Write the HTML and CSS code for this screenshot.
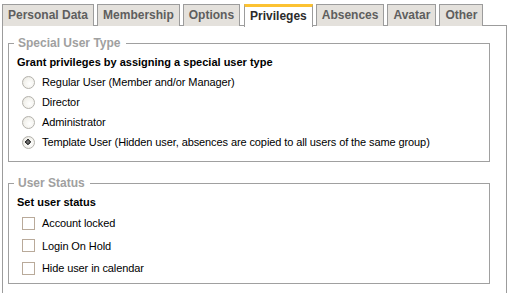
FILE: index.html
```html
<!DOCTYPE html>
<html lang="en">
<head>
    <meta charset="UTF-8">
    <title>User Privileges</title>
    <link rel="stylesheet" href="styles.css">
</head>
<body>
    <div class="tabs">
        <div class="tab">Personal Data</div>
        <div class="tab">Membership</div>
        <div class="tab">Options</div>
        <div class="tab active">Privileges</div>
        <div class="tab">Absences</div>
        <div class="tab">Avatar</div>
        <div class="tab">Other</div>
    </div>

    <div class="panel">
        <fieldset class="group">
            <legend>Special User Type</legend>
            <div class="group-title">Grant privileges by assigning a special user type</div>
            <label class="row radio-row"><input type="radio" name="usertype"> Regular User (Member and/or Manager)</label>
            <label class="row radio-row"><input type="radio" name="usertype"> Director</label>
            <label class="row radio-row"><input type="radio" name="usertype"> Administrator</label>
            <label class="row radio-row"><input type="radio" name="usertype" checked> Template User (Hidden user, absences are copied to all users of the same group)</label>
        </fieldset>

        <fieldset class="group status">
            <legend>User Status</legend>
            <div class="group-title">Set user status</div>
            <label class="row check-row"><input type="checkbox"> Account locked</label>
            <label class="row check-row"><input type="checkbox"> Login On Hold</label>
            <label class="row check-row"><input type="checkbox"> Hide user in calendar</label>
        </fieldset>
    </div>
</body>
</html>
```

FILE: styles.css
```css
* {
    box-sizing: border-box;
}

body {
    margin: 0;
    background: #fff;
    font-family: "Liberation Sans", Arial, sans-serif;
    font-size: 11px;
    color: #000;
}

/* tab strip */
.tabs {
    display: flex;
    align-items: flex-end;
    gap: 3px;
    height: 26px;
    padding-left: 2px;
    position: relative;
    z-index: 1;
}

.tab {
    height: 22px;
    padding: 0 5px;
    border: 1px solid #9c9c9c;
    border-bottom: none;
    background: #e4e1dc;
    color: #5e5e5e;
    font-size: 12px;
    font-weight: bold;
    line-height: 20px;
    white-space: nowrap;
}

.tab.active {
    height: 23px;
    margin-bottom: -1px;
    margin-left: 1px;
    border-top: 3px solid #fcc232;
    background: #fff;
    color: #2b2b2b;
    line-height: 18px;
}

/* panel body */
.panel {
    margin: -1px 1px 0 2px;
    height: 280px;
    border: 1px solid #9c9c9c;
    border-bottom: none;
    padding: 10px 16px 0 5px;
}

.group {
    margin: 0 0 14px 0;
    padding: 3px 8px 9px 8px;
    border: 1px solid #a0a0a0;
    min-width: 0;
}

.group legend {
    margin-left: -3px;
    padding: 0 5px 0 4px;
    color: #a0a0a0;
    font-size: 12px;
    font-weight: bold;
    line-height: 14px;
}

.group-title {
    height: 19px;
    line-height: 19px;
    font-weight: bold;
    font-size: 11px;
}

.row {
    display: flex;
    align-items: center;
    gap: 7px;
    height: 20px;
    padding-left: 5px;
    letter-spacing: -0.1px;
}

.status {
    padding-bottom: 3px;
}

.check-row {
    height: 22.5px;
}

/* XP style controls */
.row input {
    appearance: none;
    margin: 0;
    width: 13px;
    height: 13px;
    flex: none;
}

.radio-row input {
    border-radius: 50%;
    border: 1px solid #b4b2ac;
    background: radial-gradient(circle at 60% 60%, #ffffff 0%, #f2f1ec 60%, #dcdbd4 100%);
}

.radio-row input:checked {
    background: radial-gradient(circle at 45% 45%, #8a8a8a 0%, #3c3c3c 24%, #2a2a2a 30%, transparent 32%),
                radial-gradient(circle at 60% 60%, #ffffff 0%, #f2f1ec 60%, #dcdbd4 100%);
}

.check-row input {
    border: 1px solid #b9aa9a;
    background: #fff;
}
```
